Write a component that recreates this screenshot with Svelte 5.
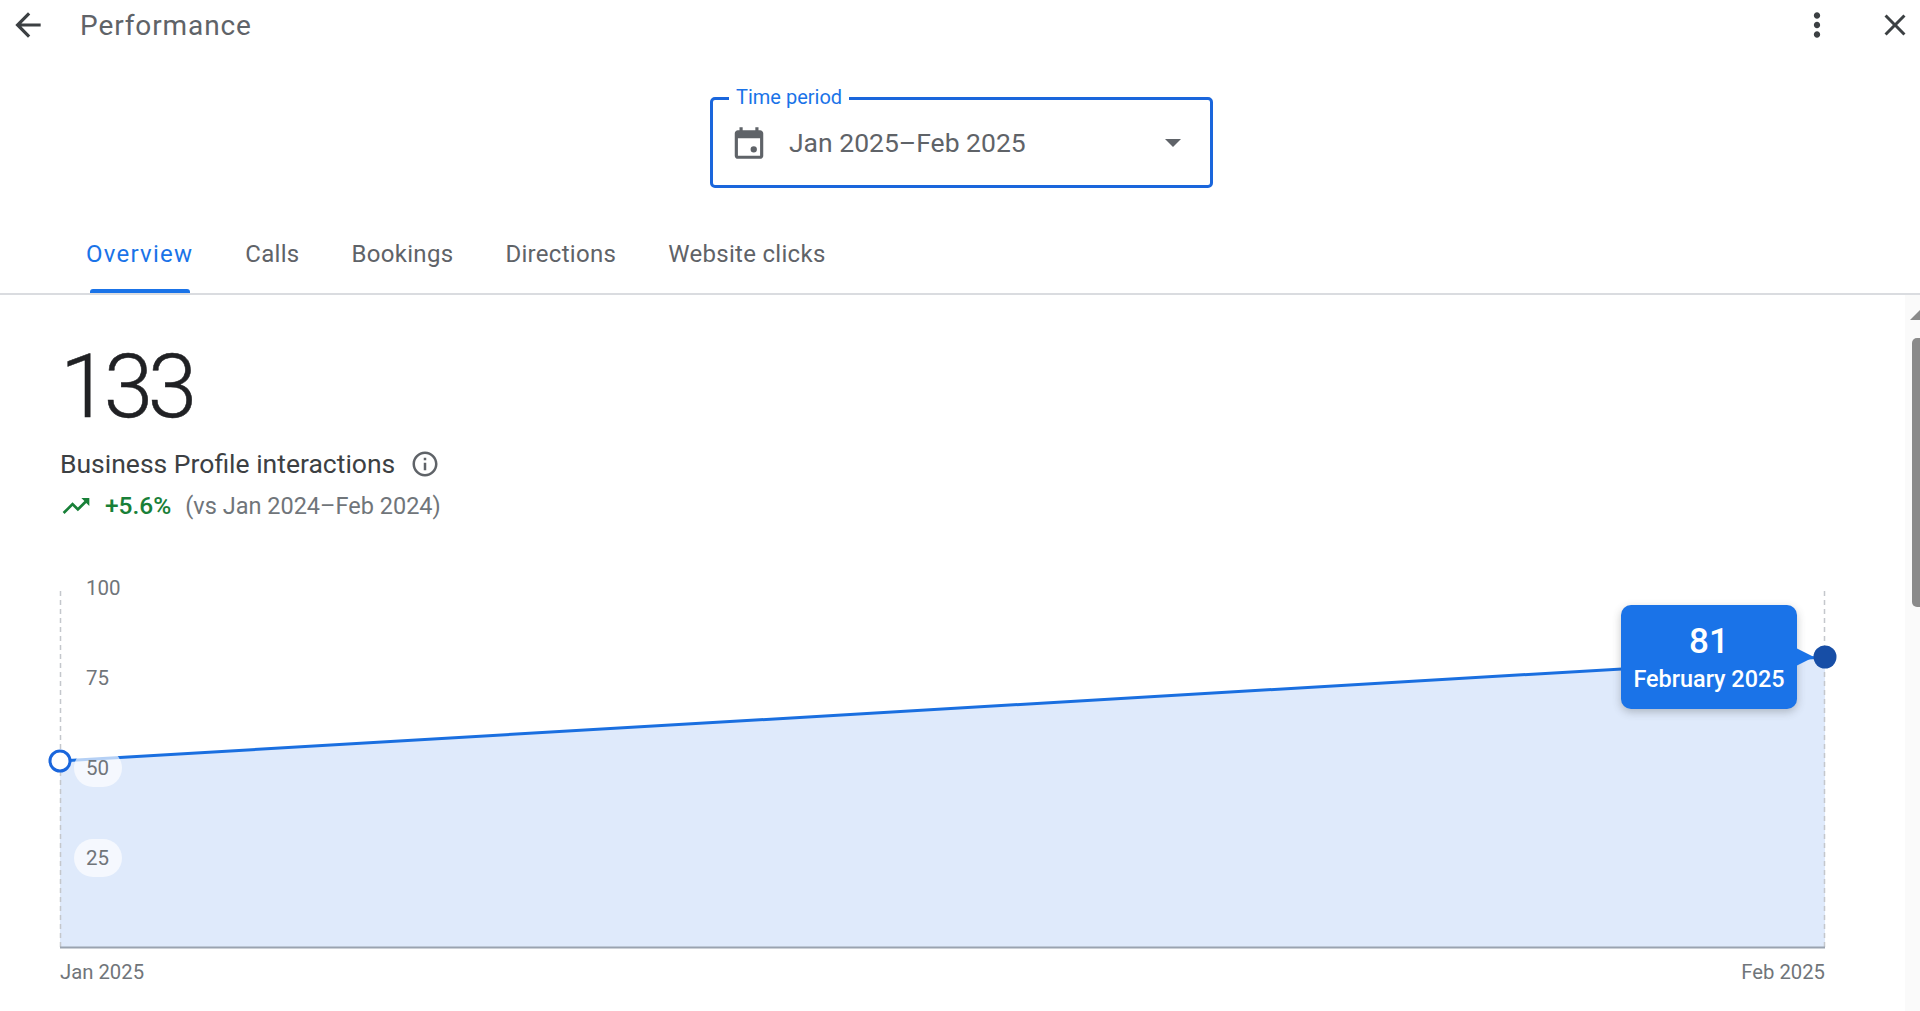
<script>
	let tabs = ["Overview", "Calls", "Bookings", "Directions", "Website clicks"];
	let active = "Overview";
	let ticks = [
		{ label: "100", top: -6 },
		{ label: "75", top: 84 },
		{ label: "50", top: 174 },
		{ label: "25", top: 264 }
	];
</script>

<div class="page">
	<header class="topbar">
		<button class="icon back" aria-label="Back">
			<svg width="38" height="38" viewBox="0 0 24 24"><path d="M20 11H7.83l5.59-5.59L12 4l-8 8 8 8 1.41-1.41L7.83 13H20v-2z" fill="#3c4043"/></svg>
		</button>
		<h1>Performance</h1>
		<button class="icon more" aria-label="More">
			<svg width="38" height="38" viewBox="0 0 24 24"><path d="M12 8c1.1 0 2-.9 2-2s-.9-2-2-2-2 .9-2 2 .9 2 2 2zm0 2c-1.1 0-2 .9-2 2s.9 2 2 2 2-.9 2-2-.9-2-2-2zm0 6c-1.1 0-2 .9-2 2s.9 2 2 2 2-.9 2-2-.9-2-2-2z" fill="#3c4043"/></svg>
		</button>
		<button class="icon close" aria-label="Close">
			<svg width="36" height="36" viewBox="0 0 24 24"><path d="M19 6.41 17.59 5 12 10.59 6.41 5 5 6.41 10.59 12 5 17.59 6.41 19 12 13.41 17.59 19 19 17.59 13.41 12z" fill="#3c4043"/></svg>
		</button>
	</header>

	<div class="period">
		<div class="select">
			<span class="legend">Time period</span>
			<svg class="cal" width="38" height="38" viewBox="0 0 24 24"><path d="M19 4h-1V2h-2v2H8V2H6v2H5c-1.1 0-2 .9-2 2v14c0 1.1.9 2 2 2h14c1.1 0 2-.9 2-2V6c0-1.1-.9-2-2-2zm0 16H5V9h14v11zm-4-6a2 2 0 1 0 0 4 2 2 0 0 0 0-4z" fill="#5f6368"/></svg>
			<span class="value">Jan 2025–Feb 2025</span>
			<svg class="caret" width="16" height="8" viewBox="0 0 16 8"><path d="M0 0h16L8 8z" fill="#5f6368"/></svg>
		</div>
	</div>

	<nav class="tabs">
		{#each tabs as tab}
			<div class="tab" class:active={tab === active}>{tab}</div>
		{/each}
	</nav>

	<main class="content">
		<div class="scrollbar">
			<div class="arrow"></div>
			<div class="thumb"></div>
		</div>

		<div class="total">133</div>
		<div class="metric">
			<span>Business Profile interactions</span>
			<svg width="30" height="30" viewBox="0 0 24 24"><path d="M11 7h2v2h-2zm0 4h2v6h-2zm1-9C6.48 2 2 6.48 2 12s4.48 10 10 10 10-4.48 10-10S17.52 2 12 2zm0 18c-4.41 0-8-3.59-8-8s3.590-8 8-8 8 3.590 8 8-3.590 8-8 8z" fill="#5f6368"/></svg>
		</div>
		<div class="change">
			<svg width="32" height="32" viewBox="0 0 24 24"><path d="m16 6 2.290 2.290-4.880 4.880-4-4L2 16.590 3.410 18l6-6 4 4 6.300-6.290L22 12V6z" fill="#188038"/></svg>
			<span class="pct">+5.6%</span>
			<span class="vs">(vs Jan 2024–Feb 2024)</span>
		</div>

		<div class="chart">
			<svg class="plot" width="1765" height="357" viewBox="0 0 1765 357">
				<path d="M0 170 L1765 66 V357 H0 Z" fill="#dfeafb"/>
				<line x1="0.5" y1="0" x2="0.500" y2="357" stroke="#c4c7cc" stroke-width="1.500" stroke-dasharray="5 4"/>
				<line x1="1764.500" y1="0" x2="1764.500" y2="357" stroke="#c4c7cc" stroke-width="1.500" stroke-dasharray="5 4"/>
				<line x1="0" y1="170" x2="1765" y2="66" stroke="#1a6fe0" stroke-width="3"/>
				<line x1="0" y1="356.500" x2="1765" y2="356.500" stroke="#9aa3b0" stroke-width="2"/>
			</svg>

			{#each ticks as t}
				<span class="tick" style="top: {t.top}px">{t.label}</span>
			{/each}

			<span class="dot start"></span>
			<span class="dot end"></span>

			<div class="tooltip">
				<span class="nub"></span>
				<strong>81</strong>
				<span>February 2025</span>
			</div>
		</div>

		<div class="axis">
			<span>Jan 2025</span>
			<span>Feb 2025</span>
		</div>
	</main>
</div>

<style>
	:global(body) {
		background: #fff;
	}
	.page {
		font-family: Roboto, "Liberation Sans", sans-serif;
		height: 1011px;
		overflow: hidden;
		color: #3c4043;
		display: flex;
		flex-direction: column;
	}
	button {
		background: none;
		border: 0;
		padding: 0;
		display: flex;
	}
	.topbar {
		height: 50px;
		display: flex;
		align-items: center;
		flex: none;
	}
	.back {
		margin-left: 9px;
	}
	h1 {
		margin: 0 0 0 33px;
		font-size: 28px;
		font-weight: 400;
		letter-spacing: 0.9px;
		color: #5f6368;
		flex: 1;
	}
	.more {
		margin-right: 41px;
	}
	.close {
		margin-right: 7px;
	}
	.period {
		display: flex;
		justify-content: center;
		margin-top: 47px;
		padding-left: 3px;
	}
	.select {
		position: relative;
		box-sizing: border-box;
		width: 503px;
		height: 91px;
		border: 3px solid #1a66dc;
		border-radius: 5px;
		display: flex;
		align-items: center;
		padding: 0 29px 0 17px;
	}
	.legend {
		position: absolute;
		top: -14px;
		left: 16px;
		padding: 0 7px;
		background: #fff;
		color: #1a73e8;
		font-size: 20px;
		line-height: 22px;
	}
	.value {
		margin-left: 21px;
		margin-bottom: 1px;
		font-size: 26.500px;
		color: #5f6368;
		flex: 1;
	}
	.tabs {
		display: flex;
		gap: 52px;
		height: 107px;
		padding: 0 0 0 86px;
		border-bottom: 2px solid #dadce0;
		flex: none;
		box-sizing: border-box;
	}
	.tab {
		position: relative;
		font-size: 24px;
		font-weight: 400;
		letter-spacing: 0.3px;
		color: #5f6368;
		padding-top: 52px;
		line-height: 28px;
	}
	.tab.active {
		color: #1a73e8;
		letter-spacing: 1.250px;
	}
	.tab.active::after {
		content: "";
		position: absolute;
		left: 4px;
		right: 3px;
		bottom: 0;
		height: 4px;
		background: #1a73e8;
		border-radius: 3px 3px 0 0;
	}
	.content {
		position: relative;
		flex: 1;
		padding: 0 0 0 60px;
	}
	.scrollbar {
		position: absolute;
		top: 0;
		right: 0;
		bottom: 0;
		width: 15px;
		background: #fafafa;
	}
	.arrow {
		position: absolute;
		top: 15px;
		right: 0;
		border-style: solid;
		border-width: 0 0 10px 10px;
		border-color: transparent transparent #8a8a8a transparent;
	}
	.thumb {
		position: absolute;
		top: 43px;
		right: 0;
		left: 7px;
		height: 269px;
		background: #8a8a8a;
		border-radius: 5px 0 0 5px;
	}
	.total {
		font-size: 89px;
		font-weight: 300;
		letter-spacing: -5.500px;
		-webkit-text-stroke: 0.5px #202124;
		color: #202124;
		line-height: 104px;
		margin-top: 40px;
	}
	.metric {
		display: flex;
		align-items: center;
		gap: 15px;
		font-size: 26.500px;
		line-height: 36px;
		margin-top: 7px;
	}
	.change {
		display: flex;
		align-items: center;
		font-size: 23.500px;
		line-height: 32px;
		margin-top: 8px;
	}
	.pct {
		color: #188038;
		font-size: 24.500px;
		font-weight: 500;
		margin-left: 13px;
	}
	.vs {
		color: #70757a;
		margin-left: 14px;
	}
	.chart {
		position: relative;
		width: 1765px;
		height: 357px;
		margin-top: 69px;
	}
	.plot {
		display: block;
		overflow: visible;
	}
	.tick {
		position: absolute;
		box-sizing: border-box;
		left: 14px;
		width: 48px;
		height: 38px;
		line-height: 38px;
		margin-top: -16px;
		padding-left: 12px;
		font-size: 20.500px;
		color: #70757a;
		border-radius: 19px;
		background: rgba(255, 255, 255, 0.68);
	}
	.dot {
		position: absolute;
		box-sizing: border-box;
		width: 23px;
		height: 23px;
		border-radius: 50%;
		transform: translate(-50%, -50%);
	}
	.dot.start {
		left: 0;
		top: 170px;
		background: #fff;
		border: 3.500px solid #1a66dc;
	}
	.dot.end {
		left: 1765px;
		top: 66px;
		background: #174ea6;
	}
	.tooltip {
		position: absolute;
		left: 1561px;
		top: 14px;
		width: 176px;
		height: 104px;
		box-sizing: border-box;
		background: #1a73e8;
		border-radius: 10px;
		box-shadow: 0 3px 8px rgba(60, 64, 67, 0.3);
		color: #fff;
		display: flex;
		flex-direction: column;
		align-items: center;
		padding-top: 17px;
		font-size: 23.400px;
		font-weight: 500;
		line-height: 34px;
	}
	.tooltip strong {
		font-size: 35px;
		font-weight: 500;
		line-height: 40px;
	}
	.nub {
		position: absolute;
		left: 171px;
		top: 41px;
		width: 22px;
		height: 22px;
		background: #1a73e8;
		clip-path: polygon(0 0, 100% 50%, 100% 50%, 0 100%);
	}
	.axis {
		width: 1765px;
		display: flex;
		justify-content: space-between;
		margin-top: 12px;
		font-size: 20.300px;
		color: #70757a;
	}
</style>
